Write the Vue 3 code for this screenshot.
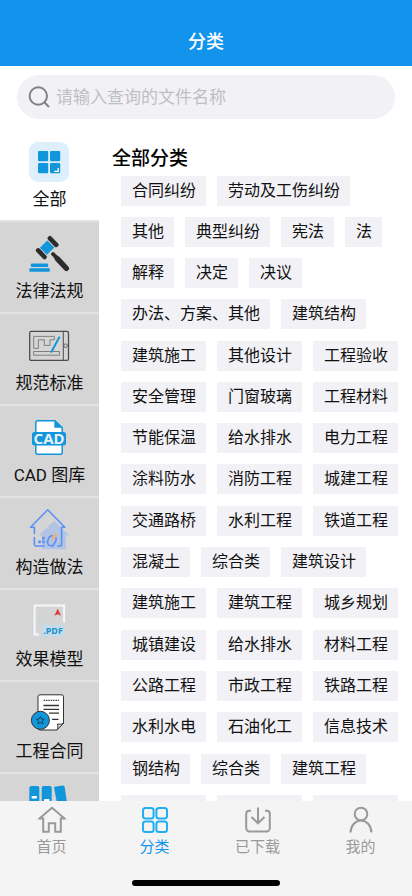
<script setup>
import { ref } from 'vue'

const keyword = ref('')
const activeCategory = ref('all')

const categories = [
  { id: 'all', label: '全部' },
  { id: 'law', label: '法律法规' },
  { id: 'standard', label: '规范标准' },
  { id: 'cad', label: 'CAD 图库' },
  { id: 'build', label: '构造做法' },
  { id: 'model', label: '效果模型' },
  { id: 'contract', label: '工程合同' },
  { id: 'books', label: '资料书籍' }
]

const tagGroups = [
  ['合同纠纷', '劳动及工伤纠纷', '其他', '典型纠纷', '宪法', '法', '解释', '决定', '决议', '办法、方案、其他', '建筑结构'],
  ['建筑施工', '其他设计', '工程验收', '安全管理', '门窗玻璃', '工程材料', '节能保温', '给水排水', '电力工程', '涂料防水', '消防工程', '城建工程'],
  ['交通路桥', '水利工程', '铁道工程', '混凝土', '综合类', '建筑设计', '建筑施工', '建筑工程', '城乡规划'],
  ['城镇建设', '给水排水', '材料工程', '公路工程', '市政工程', '铁路工程', '水利水电', '石油化工', '信息技术'],
  ['钢结构', '综合类', '建筑工程', '园林景观', '装饰装修', '机电安装']
]

const tabs = [
  { id: 'home', label: '首页' },
  { id: 'category', label: '分类' },
  { id: 'download', label: '已下载' },
  { id: 'mine', label: '我的' }
]
</script>

<template>
  <div class="page">
    <header class="topbar">
      <h1>分类</h1>
    </header>

    <form class="search" role="search" @submit.prevent>
      <svg viewBox="0 0 22 22" aria-hidden="true">
        <circle cx="10.3" cy="10" r="8.7" />
        <path d="M15.8 15.8 21 21" />
      </svg>
      <input v-model="keyword" type="text" placeholder="请输入查询的文件名称" aria-label="请输入查询的文件名称" />
    </form>

    <main class="content">
      <nav class="sidebar">
        <button
          v-for="c in categories"
          :key="c.id"
          type="button"
          class="category"
          :class="{ active: c.id === activeCategory }"
          @click="activeCategory = c.id"
        >
          <svg class="category-icon" viewBox="0 0 40 40" aria-hidden="true">
            <g v-if="c.id === 'all'">
              <rect width="40" height="40" rx="9" fill="#dceffa" />
              <g fill="#1296db">
                <rect x="9" y="9" width="10.2" height="10.2" rx="1.2" />
                <rect x="21" y="9" width="10.2" height="10.2" rx="1.2" />
                <rect x="9" y="21" width="10.2" height="10.2" rx="1.2" />
                <rect x="21" y="21" width="10.2" height="10.2" rx="1.2" />
              </g>
              <path d="M29.2 26v3.4h-4" fill="none" stroke="#fff" stroke-width="1.4" />
            </g>
            <g v-else-if="c.id === 'law'">
              <rect x="1.8" y="29.6" width="17.4" height="3.4" rx="1.2" fill="#1296db" />
              <rect x=".3" y="34.2" width="20.6" height="3.6" rx="1.2" fill="#1296db" />
              <path d="m18.3 6.4 7 7-7.4 7.4-7-7z" fill="#1296db" />
              <path d="m20.9 4.3 6.3 6.6M9.2 16.4l6.3 6.6" stroke="#2c2c2c" stroke-width="4.6" stroke-linecap="round" />
              <path d="m24 20 6.5 6.8" stroke="#2c2c2c" stroke-width="3.8" stroke-linecap="round" />
              <path d="m26.5 20.6 4 2.3 8.8 9.6a2.5 2.5 0 0 1-3.8 3.8l-9-9.6-2-4z" fill="#2c2c2c" />
            </g>
            <g v-else-if="c.id === 'standard'" fill="none" stroke="#4d4d4d">
              <rect x=".7" y="5.4" width="38.8" height="29" rx="1.5" stroke-width="1.3" />
              <path d="M34.3 5.4v29" />
              <circle cx="36.6" cy="19.7" r="1.8" stroke-width=".8" />
              <g stroke="#777" stroke-width=".9">
                <path d="M4.7 10.4h20.6v3.4H21v5.6h-5.7v-5.6H9.4v8.6H4.7z" />
                <rect x="4.7" y="25.5" width="25.7" height="3.7" />
              </g>
              <path d="m30.6 10.6-8.2 15.4" stroke="#1296db" stroke-width="2" />
              <path d="m22.5 24-1.3 3.6 3-2.4z" fill="#1296db" stroke="none" />
            </g>
            <g v-else-if="c.id === 'cad'">
              <path d="M8.8 2.8H26l7.2 7v24.5a2 2 0 0 1-2 2H8.8a2 2 0 0 1-2-2V4.8a2 2 0 0 1 2-2z" fill="#fff" stroke="#1296db" stroke-width="1.5" />
              <path d="M25.3 2.3v7.5H34z" fill="#1296db" />
              <rect x="3" y="14" width="34" height="13.6" rx="2.5" fill="#1296db" />
              <text x="20" y="26" text-anchor="middle" class="cad-text">CAD</text>
            </g>
            <g v-else-if="c.id === 'build'">
              <path d="m25.3 10.7 14.9 14.5h-3.4v12.6a1.5 1.5 0 0 1-1.5 1.5H14.5a1.5 1.5 0 0 1-1.5-1.5V25.2h-3z" fill="#b3c3e3" />
              <g fill="none" stroke="#5b90f6" stroke-width="1.6" stroke-linejoin="round">
                <path d="M5.4 24v-6.8H1.6L18.7-.2l17.1 17.4h-3.2v17.2a1.6 1.6 0 0 1-1.6 1.6h-2.6M5.4 27v7.4A1.6 1.6 0 0 0 7 36h8.5" />
                <path d="m23.6 25.2-3.4 1.8-1.9 5 1.3 3.2 4.2.8 3-5 .4-3.6" />
              </g>
              <path d="M9.3 30.6h2.6v2.6H9.3zM13.1 30.6h2.6v2.6h-2.6zM13.1 26.8h2.6v2.6h-2.6z" fill="#5b90f6" />
              <path d="m27 23.4-3.6 6" stroke="#f5ad6b" stroke-width="2.4" />
            </g>
            <g v-else-if="c.id === 'model'">
              <path d="M10 32.5H5.6V3.4h29.5v17" fill="none" stroke="#f3f8fb" stroke-width="2" />
              <path d="M10 9v14M18 9v12M9 13h14M9 20h18" stroke="#cbd4db" stroke-width=".7" stroke-dasharray="2 1" />
              <rect x="12.7" y="23" width="23" height="11.6" fill="#c3dbea" />
              <path d="m28.7 6.4 3.3 7.4-3.3-1.6-3.3 1.6z" fill="#d93d3f" />
              <text x="24" y="32" text-anchor="middle" class="pdf-text">.PDF</text>
            </g>
            <g v-else-if="c.id === 'contract'">
              <path d="M11 .8h21.5a2 2 0 0 1 2 2v26.4L28 36H11a2 2 0 0 1-2-2V2.8a2 2 0 0 1 2-2z" fill="#fff" stroke="#333" />
              <path d="M28 36c1.2-2 .9-4 .4-6 2 .5 4.1.3 6.1-.8z" fill="#ddd" stroke="#333" />
              <path d="M14.5 6.3H30" stroke="#444" stroke-width="1.3" stroke-dasharray="1.6 .8" />
              <path d="M14.5 11.5H30M14.5 15.3H30M20 19.2h10M23 25.3h6.5" stroke="#333" stroke-width="1.3" />
              <circle cx="11.4" cy="26.3" r="9" fill="#1296db" stroke="#333" />
              <path d="m11.4 22.5 1.2 2.5 2.7.3-2 1.9.5 2.7-2.4-1.3L9 29.9l.5-2.7-2-1.9 2.7-.3z" fill="none" stroke="#173b50" />
            </g>
            <g v-else fill="#1296db">
              <rect x=".3" y="0" width="10" height="36" rx="2" />
              <rect x="12.7" y="0" width="10" height="36" rx="2" />
              <path d="M27 .4 33.5-.4a2 2 0 0 1 2.2 1.6L40.5 34l-9 2L25.2 2.4A1.7 1.7 0 0 1 27 .4z" />
              <rect x="2.500" y="10" width="5.500" height="2.500" rx="1" fill="#fff" />
              <rect x="15" y="13" width="5.500" height="2.500" rx="1" fill="#fff" />
            </g>
          </svg>
          <span>{{ c.label }}</span>
        </button>
      </nav>

      <section class="panel">
        <h2>全部分类</h2>
        <div class="groups">
          <ul v-for="(group, g) in tagGroups" :key="g" class="tags">
            <li v-for="t in group" :key="t">
              <button type="button">{{ t }}</button>
            </li>
          </ul>
        </div>
      </section>
    </main>

    <footer class="bottom">
      <nav class="tabs">
        <a v-for="t in tabs" :key="t.id" :href="'#' + t.id" :class="{ current: t.id === 'category' }">
          <svg viewBox="0 0 28 28" aria-hidden="true">
            <path v-if="t.id === 'home'" d="M14 1.8 1.5 12.6h3.7v13.2h5.6v-8.6h6.4v8.6h5.600V12.6h3.7z" />
            <g v-else-if="t.id === 'category'">
              <rect x="2" y="2" width="10.6" height="10.6" rx="2.5" />
              <rect x="15.4" y="2" width="10.6" height="10.6" rx="2.5" />
              <rect x="2" y="15.4" width="10.6" height="10.6" rx="2.5" />
              <rect x="15.4" y="15.4" width="10.6" height="10.6" rx="2.5" />
            </g>
            <g v-else-if="t.id === 'download'">
              <path d="M7 4.800H5.200a3 3 0 0 0-3 3v14.400a3.200 3.200 0 0 0 3.200 3.200h17.200a3.200 3.200 0 0 0 3.200-3.200V7.800a3 3 0 0 0-3-3H21" />
              <path d="M14 1.500v15.800M7.500 11l6.500 6.300 6.500-6.300" />
            </g>
            <g v-else>
              <circle cx="14" cy="8" r="6.3" />
              <path d="M3.600 26.500a10.400 12 0 0 1 20.800 0" />
            </g>
          </svg>
          <span>{{ t.label }}</span>
        </a>
      </nav>
      <div class="home-indicator"></div>
    </footer>
  </div>
</template>

<style>
body {
  margin: 0;
  background: #fff;
}
</style>

<style scoped>
.page {
  display: flex;
  flex-direction: column;
  height: 100vh;
  overflow: hidden;
  background: #fff;
  color: #111;
  font-family: Roboto, "Noto Sans CJK SC", sans-serif;
}

button,
input {
  margin: 0;
  border: 0;
  font-family: inherit;
  color: inherit;
}

.topbar {
  flex: none;
  padding: 29px 0 11px;
  background: #1394ec;
}

.topbar h1 {
  margin: 0;
  color: #fff;
  font-size: 18px;
  font-weight: 500;
  line-height: 26px;
  text-align: center;
}

.search {
  display: flex;
  flex: none;
  align-items: center;
  gap: 6px;
  height: 44px;
  margin: 9px 17px;
  padding: 0 16px 0 11px;
  box-sizing: border-box;
  border-radius: 22px;
  background: #f2f1f6;
}

.search svg {
  flex: none;
  width: 22px;
  height: 22px;
  fill: none;
  stroke: #828284;
  stroke-width: 2;
}

.search input {
  flex: 1;
  min-width: 0;
  height: 44px;
  padding: 0;
  background: none;
  font-size: 17px;
  outline: none;
}

.search input::placeholder {
  color: #bfbfc3;
  opacity: 1;
}

.content {
  display: flex;
  flex: 1;
  min-height: 0;
}

.sidebar {
  display: flex;
  flex: none;
  flex-direction: column;
  width: 24%;
  overflow: hidden;
}

.category {
  display: flex;
  flex: none;
  flex-direction: column;
  align-items: center;
  gap: 5px;
  padding: 12px 0 9px;
  border-top: 2px solid #e2e2e6;
  background: #d5d5d5;
  font-size: 17px;
  line-height: 24px;
  white-space: nowrap;
}

.category.active {
  border-color: #fff;
  background: #fff;
}

.category-icon {
  width: 40px;
  height: 40px;
  overflow: visible;
}

.cad-text {
  fill: #e4f1f8;
  font-family: "Noto Sans", sans-serif;
  font-size: 15px;
  font-weight: 700;
}

.pdf-text {
  fill: #1c93cf;
  font-family: "Noto Sans", sans-serif;
  font-size: 9px;
  font-weight: 700;
}

.panel {
  flex: 1;
  min-width: 0;
  padding: 17px 10px 0 13px;
  overflow: hidden;
}

.panel h2 {
  margin: 0 0 3px;
  color: #000;
  font-size: 19px;
  font-weight: 500;
  line-height: 28px;
}

.groups {
  display: grid;
  gap: 12px;
  padding-left: 9px;
}

.tags {
  display: flex;
  flex-wrap: wrap;
  gap: 11px;
  margin: 0;
  padding: 0;
  list-style: none;
}

.tags li {
  display: flex;
}

.tags button {
  height: 30px;
  padding: 0 10px 0 11px;
  background: #f2f1f6;
  font-size: 16px;
  line-height: 30px;
}

.bottom {
  flex: none;
  padding: 5px 0 10px;
  background: #f4f4f4;
}

.tabs {
  display: grid;
  grid-template-columns: repeat(4, 1fr);
}

.tabs a {
  display: flex;
  flex-direction: column;
  align-items: center;
  gap: 2px;
  color: #999;
  font-size: 15px;
  line-height: 22px;
  text-decoration: none;
}

.tabs svg {
  width: 28px;
  height: 28px;
  fill: none;
  stroke: currentColor;
  stroke-width: 2;
}

.tabs .current {
  color: #1394ec;
}

.tabs .current svg {
  stroke: #22aef2;
}

.home-indicator {
  width: 36%;
  height: 6px;
  margin: 22px auto 0;
  border-radius: 3px;
  background: #000;
}
</style>
